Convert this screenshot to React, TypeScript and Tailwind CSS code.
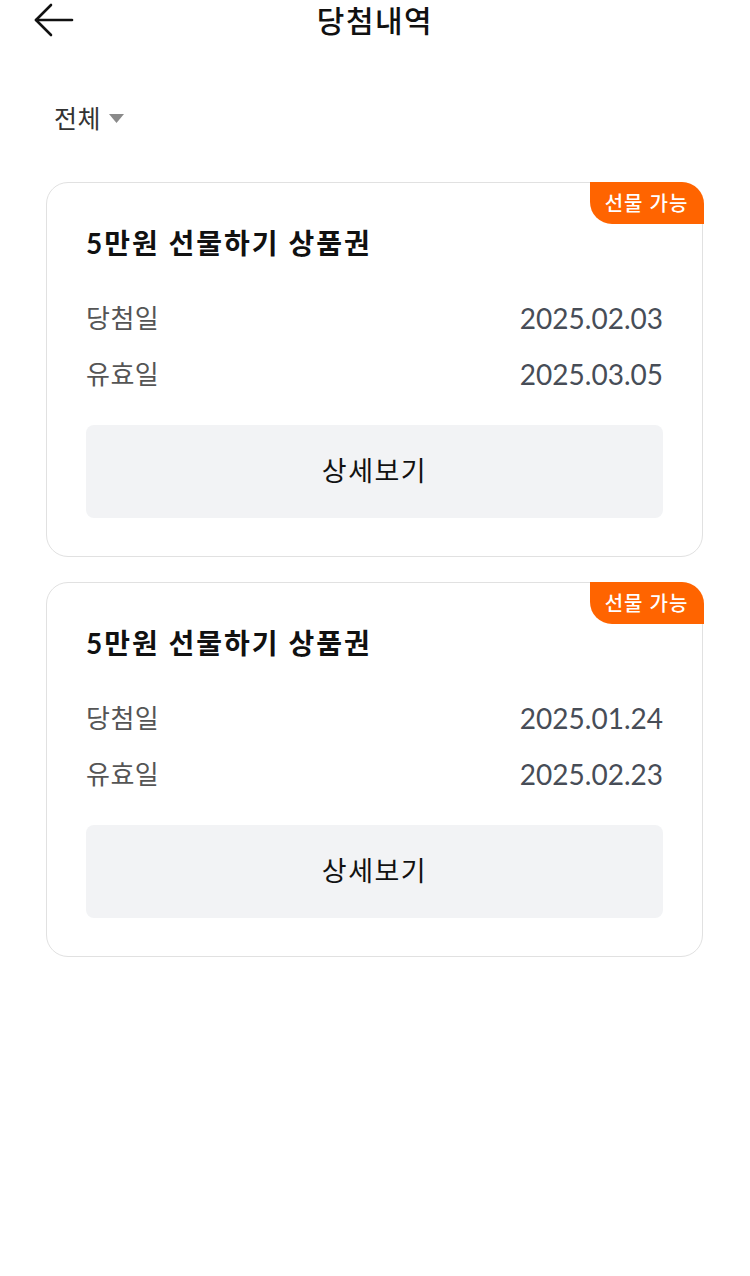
import React from "react";

const FONT = { fontFamily: "Lato, 'Noto Sans CJK KR', sans-serif" };

type Item = { won: string; valid: string };

const items: Item[] = [
  { won: "2025.02.03", valid: "2025.03.05" },
  { won: "2025.01.24", valid: "2025.02.23" },
];

function Card({ item }: { item: Item }) {
  return (
    <div className="relative rounded-[22px] border-[1.5px] border-[#e1e1e1] bg-white px-[39px] pt-[42px] pb-[38px]">
      <div className="absolute -top-[1.5px] -right-[1.5px] flex h-[42px] w-[114px] items-center justify-center rounded-tr-[22px] rounded-bl-[22px] bg-[#ff6400] text-[20px] font-medium tracking-[1px] text-white">
        선물 가능
      </div>
      <div className="text-[28px] leading-[36px] font-bold tracking-[2px] text-[#111111]">5만원 선물하기 상품권</div>
      <div className="mt-[39px] flex flex-col gap-[20px]">
        <div className="flex items-center justify-between leading-[36px]">
          <span className="text-[26px] tracking-[0.5px] text-[#555555]">당첨일</span>
          <span className="text-[28px] text-[#474d57]">{item.won}</span>
        </div>
        <div className="flex items-center justify-between leading-[36px]">
          <span className="text-[26px] tracking-[0.5px] text-[#555555]">유효일</span>
          <span className="text-[28px] text-[#474d57]">{item.valid}</span>
        </div>
      </div>
      <div className="mt-[33px] flex h-[93px] items-center justify-center rounded-[8px] bg-[#f2f3f5] text-[27px] tracking-[1.5px] text-[#111111]">
        상세보기
      </div>
    </div>
  );
}

export default function App() {
  return (
    <div className="min-h-[1276px] w-[750px] bg-white" style={FONT}>
      <div className="grid h-[40px] grid-cols-[1fr_auto_1fr] items-center px-[34px]">
        <svg width="40" height="34" viewBox="0 0 40 34" fill="none" stroke="#111" strokeWidth="2.6" strokeLinecap="round" strokeLinejoin="round">
          <path d="M38 17H2" />
          <path d="M17 2L2 17l15 15" />
        </svg>
        <div className="text-[30px] leading-[40px] font-medium tracking-[1.5px] text-[#111111]">당첨내역</div>
        <div />
      </div>
      <div className="mt-[62px] flex items-center gap-[8px] px-[54px] leading-[32px]">
        <span className="text-[25px] tracking-[0.5px] text-[#333333]">전체</span>
        <svg width="15" height="9" viewBox="0 0 15 9">
          <path d="M0 0h15L7.5 9z" fill="#8a8a8a" />
        </svg>
      </div>
      <div className="mt-[48px] flex flex-col gap-[25px] pl-[46px] pr-[47px]">
        {items.map((it, i) => (
          <Card key={i} item={it} />
        ))}
      </div>
    </div>
  );
}
